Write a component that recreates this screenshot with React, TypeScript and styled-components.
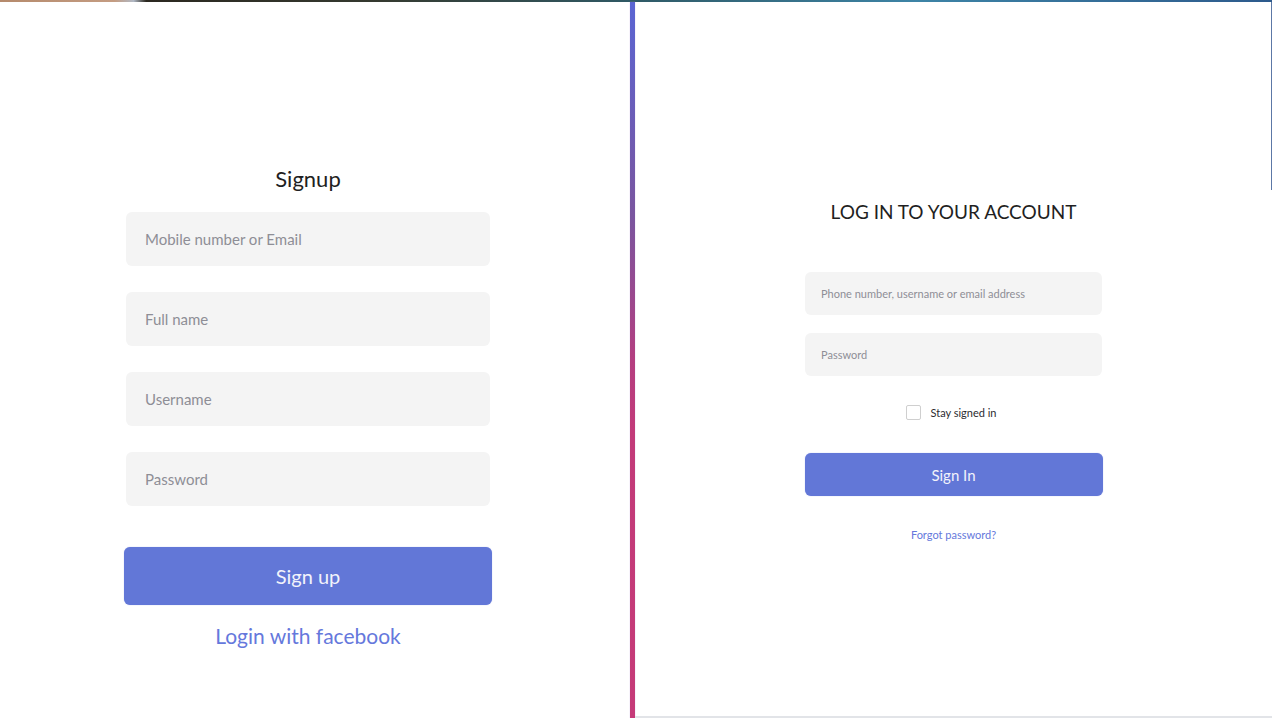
import styled, { createGlobalStyle } from "styled-components";

const GlobalStyle = createGlobalStyle`
  html, body {
    margin: 0;
    padding: 0;
    background: #fff;
    font-family: Lato, "Open Sans", sans-serif;
  }
  * { box-sizing: border-box; }
`;

const Page = styled.div`
  width: 1272px;
  height: 718px;
  display: flex;
  flex-direction: column;
  overflow: hidden;
`;

const TopStrip = styled.div`
  height: 2px;
  flex: none;
  background: linear-gradient(
    to right,
    #b58a6c 0%,
    #c49c82 9%,
    #b0b8c4 10.5%,
    #2b2820 11.5%,
    #353a30 30%,
    #2f5a66 50%,
    #3d84a6 72%,
    #2d5a8c 100%
  );
`;

const Row = styled.div`
  flex: 1;
  display: flex;
`;

const LeftPanel = styled.section`
  width: 630px;
  display: flex;
  flex-direction: column;
  align-items: center;
  padding: 164px 14px 0 0;
`;

const Divider = styled.div`
  width: 5px;
  flex: none;
  background: linear-gradient(to bottom, #5a65d3 0%, #7a559f 30%, #b43e80 50%, #c23a79 60%, #c53a78 100%);
  box-shadow: 0 0 1px rgba(190, 150, 220, 0.7);
`;

const RightPanel = styled.section`
  position: relative;
  flex: 1;
  display: flex;
  flex-direction: column;
  align-items: center;
  padding-top: 198px;
  border-bottom: 2px solid #e2e4e8;

  &::after {
    content: "";
    position: absolute;
    right: 0;
    top: 0;
    width: 1px;
    height: 188px;
    background: #5c78a6;
  }
`;

const Title = styled.h1<{ $size: number }>`
  margin: 0;
  font-weight: 400;
  font-size: ${(p) => p.$size}px;
  line-height: ${(p) => Math.round(p.$size * 1.2)}px;
  color: #1f1f22;
`;

const Form = styled.div<{ $width: number; $gap: number; $top: number }>`
  width: ${(p) => p.$width}px;
  display: flex;
  flex-direction: column;
  align-items: center;
  gap: ${(p) => p.$gap}px;
  margin-top: ${(p) => p.$top}px;
`;

const Field = styled.input<{ $h: number; $fs: number; $pad: number }>`
  width: 100%;
  height: ${(p) => p.$h}px;
  border: none;
  outline: none;
  border-radius: 6px;
  background: #f4f4f4;
  padding: 0 ${(p) => p.$pad}px;
  font-family: Lato, sans-serif;
  font-size: ${(p) => p.$fs}px;
  color: #333;

  &::placeholder {
    color: #8e8e96;
  }
`;

const Button = styled.button<{ $h: number; $fs: number; $w: number }>`
  width: ${(p) => p.$w}px;
  height: ${(p) => p.$h}px;
  border: none;
  border-radius: 6px;
  background: #6277d7;
  color: #f2f3fb;
  font-family: Lato, sans-serif;
  font-size: ${(p) => p.$fs}px;
  cursor: pointer;
  box-shadow: 0 0 1px rgba(98, 119, 215, 0.6);
`;

const LinkText = styled.a<{ $fs: number }>`
  font-size: ${(p) => p.$fs}px;
  color: #6578dc;
  text-decoration: none;
  cursor: pointer;
`;

const CheckRow = styled.label`
  display: flex;
  align-items: center;
  gap: 9px;
  font-size: 11px;
  color: #2c2c30;
  margin-left: -4px;
`;

const Box = styled.span`
  width: 15px;
  height: 15px;
  border: 1px solid #cfcfcf;
  border-radius: 2px;
  background: #fff;
`;

export default function App() {
  return (
    <Page>
      <GlobalStyle />
      <TopStrip />
      <Row>
        <LeftPanel>
          <Title $size={22}>Signup</Title>
          <Form $width={364} $gap={26} $top={20}>
            <Field $h={54} $fs={15} $pad={19} placeholder="Mobile number or Email" />
            <Field $h={54} $fs={15} $pad={19} placeholder="Full name" />
            <Field $h={54} $fs={15} $pad={19} placeholder="Username" />
            <Field $h={54} $fs={15} $pad={19} placeholder="Password" type="password" />
          </Form>
          <Form $width={368} $gap={18} $top={41}>
            <Button $w={368} $h={58} $fs={20}>Sign up</Button>
            <LinkText $fs={21}>Login with facebook</LinkText>
          </Form>
        </LeftPanel>
        <Divider />
        <RightPanel>
          <Title $size={19}>LOG IN TO YOUR ACCOUNT</Title>
          <Form $width={297} $gap={18} $top={49}>
            <Field $h={43} $fs={11} $pad={16} placeholder="Phone number, username or email address" />
            <Field $h={43} $fs={11} $pad={16} placeholder="Password" type="password" />
          </Form>
          <Form $width={298} $gap={0} $top={29}>
            <CheckRow>
              <Box />
              Stay signed in
            </CheckRow>
            <Button $w={298} $h={43} $fs={15} style={{ marginTop: 33 }}>Sign In</Button>
            <LinkText $fs={11} style={{ marginTop: 32 }}>Forgot password?</LinkText>
          </Form>
        </RightPanel>
      </Row>
    </Page>
  );
}
